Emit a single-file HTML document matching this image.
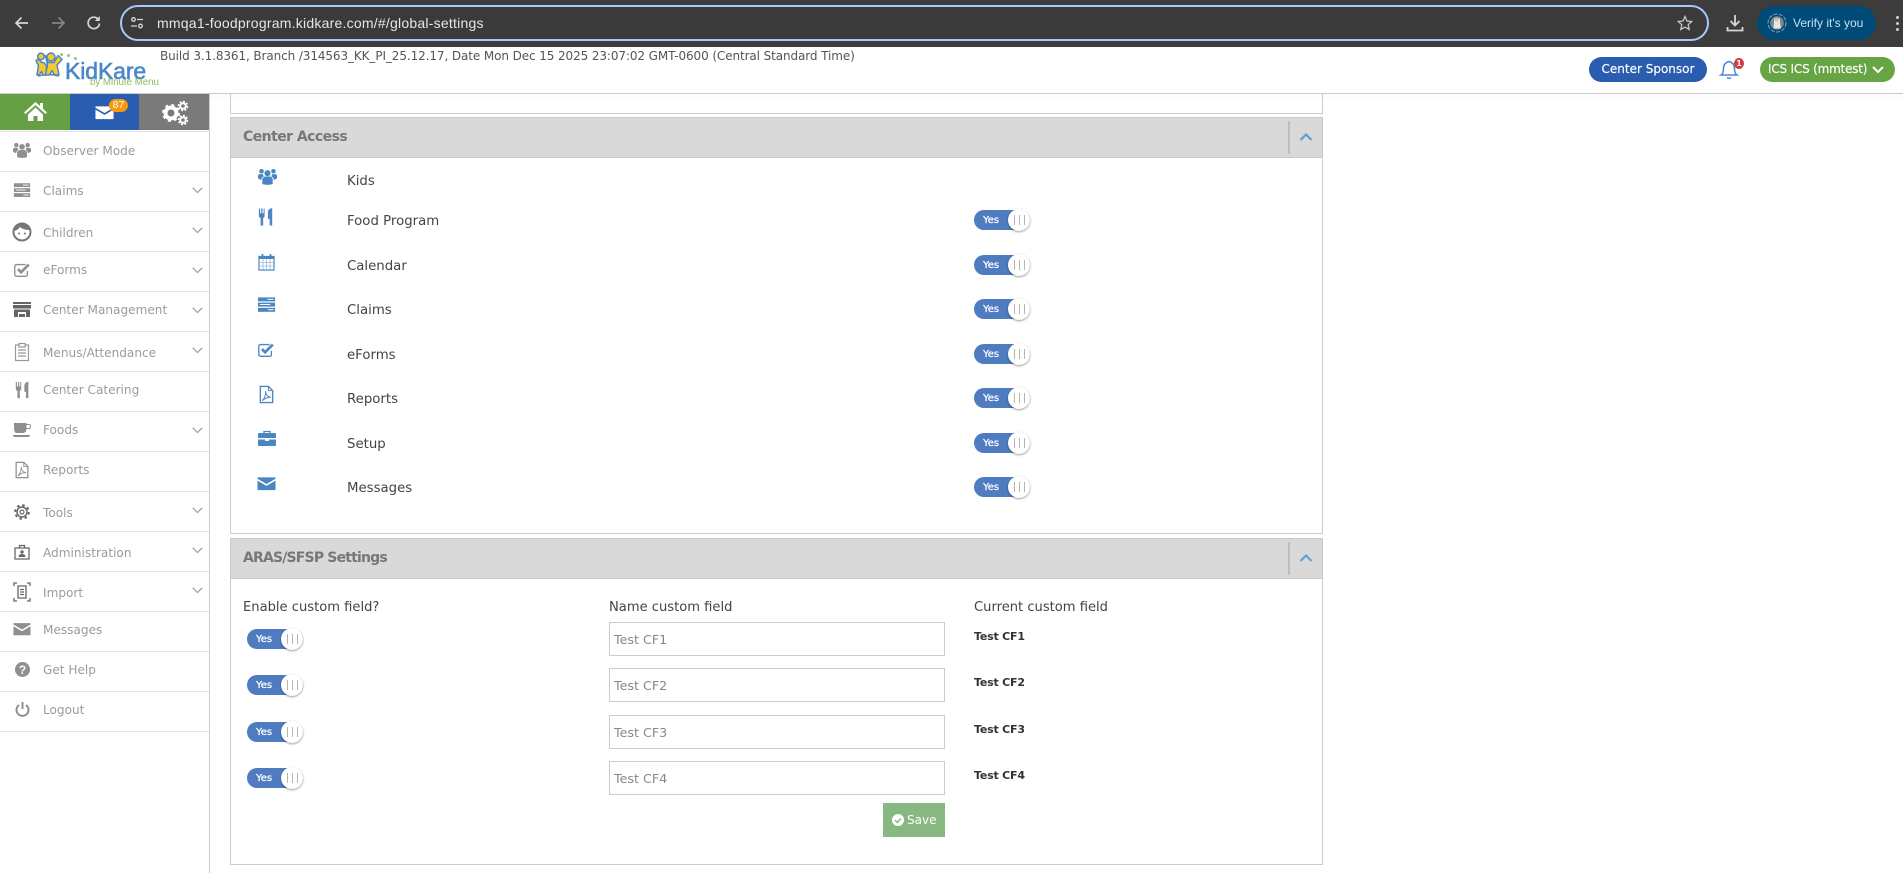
<!DOCTYPE html>
<html lang="en"><head><meta charset="utf-8"><title>KidKare</title>
<style>
*{box-sizing:border-box}
html,body{margin:0;padding:0;width:1903px;height:873px;overflow:hidden;background:#fff;font-family:"DejaVu Sans","Liberation Sans",sans-serif}
.a,.t,svg.i,.tg,.b{position:absolute}
.t{white-space:nowrap;line-height:20px;height:20px}
.s{left:43px;font-size:12.100px;color:#9b9b9b;letter-spacing:0}
.l{left:347px;font-size:13.300px;color:#444;margin-top:1px}
.h{left:243px;font-size:14px;font-weight:bold;color:#777;letter-spacing:-.55px}
.c{left:974px;font-size:11px;font-weight:bold;color:#333;letter-spacing:-.2px}
.n{font-size:13.100px;color:#444;margin-top:1px}
.line{position:absolute;left:0;width:209px;height:1px;background:#e4e4e4}
.tg{width:56px;height:20px;background:#4f7cc0;border-radius:10px}
.tg b{position:absolute;left:9px;top:1px;line-height:20px;font-size:10px;font-weight:normal;color:#fff;-webkit-text-stroke:.25px #fff}
.tg i{position:absolute;left:34px;top:-1px;width:22px;height:22px;border-radius:50%;background:#fff;box-shadow:0 1px 2px rgba(0,0,0,.4)}
.tg i:after{content:"";position:absolute;left:6px;top:6px;width:9px;height:10px;border-left:1px solid #b5b5b5;border-right:1px solid #b5b5b5;background:linear-gradient(#b5b5b5,#b5b5b5) center/1px 100% no-repeat}
.in{position:absolute;left:609px;width:336px;height:34px;border:1px solid #ccc;background:#fff;color:#888;font-size:12.700px;line-height:34px;padding-left:4px}
svg.sb{color:#8f8f8f}
svg.bl{color:#4a87c2}
</style></head><body>
<svg width="0" height="0" style="position:absolute"><defs>
<symbol id="people" viewBox="0 0 20 20"><g fill="currentColor"><circle cx="10" cy="6.500" r="3.200"/><circle cx="3.700" cy="4.500" r="2.400"/><circle cx="16.300" cy="4.500" r="2.400"/><path d="M4.500 18v-4.500A3.500 3.500 0 0 1 8 10h4a3.500 3.500 0 0 1 3.500 3.500V18q-5.500 1.500-11 0z"/><path d="M0 12V9.500A2 2 0 0 1 2 7.500h3a4 4 0 0 0 1.300 2.300A4.500 4.500 0 0 0 3.500 13v.5Q1 13 0 12zM20 12V9.500a2 2 0 0 0-2-2h-3a4 4 0 0 1-1.300 2.300A4.500 4.500 0 0 1 16.500 13v.5Q19 13 20 12z"/></g></symbol>
<symbol id="server" viewBox="0 0 20 20"><g fill="currentColor"><rect x="1" y="2.500" width="18" height="4.200"/><rect x="1" y="8" width="18" height="4.200"/><rect x="1" y="13.500" width="18" height="4.200"/></g><g fill="#fff"><rect x="11" y="4" width="6.500" height="1"/><rect x="3" y="9.500" width="11" height="1"/><rect x="11.500" y="15" width="6" height="1"/></g></symbol>
<symbol id="check" viewBox="0 0 20 20"><path d="M16 11v4a2 2 0 0 1-2 2H4a2 2 0 0 1-2-2V6a2 2 0 0 1 2-2h10" fill="none" stroke="currentColor" stroke-width="1.500"/><path d="M5.500 9l3.500 3.500L17.500 4" fill="none" stroke="currentColor" stroke-width="3"/></symbol>
<symbol id="pdf" viewBox="0 0 20 20"><path d="M3.500 1.500H12l4.500 4.500v12.500h-13z" fill="none" stroke="currentColor" stroke-width="1.400"/><path d="M12 1.500V6h4.500M5.500 16.500C8 14 9.500 10 9 6.500c0 3 2 6 5.500 6.500-3-.5-6 1-9 3.500z" fill="none" stroke="currentColor" stroke-width="1"/></symbol>
<symbol id="food" viewBox="0 0 20 20"><path fill="currentColor" d="M2 1h1.300v5h1.200V1h1.300v5h1.200V1H8v8q0 1.500-1.500 2v8H3.800v-8Q2 10.500 2 9zM11.500 12V5q0-3.500 4.500-4.500V19h-2.700v-7z"/></symbol>
<symbol id="mail" viewBox="0 0 20 20"><path fill="currentColor" d="M1 3.500h18q.5 0 .5.500v1L10 10.500.5 5V4q0-.5.500-.5zM.5 7l9.500 5.500L19.500 7v9.500q0 .5-.5.500H1q-.5 0-.5-.5z"/></symbol>
</defs></svg>

<!-- browser chrome -->
<div class="a" style="left:0;top:0;width:1903px;height:47px;background:#3c3c3c"></div>
<svg class="i" style="left:13px;top:14px" width="18" height="18" viewBox="0 0 18 18"><path d="M15 9H3.500M8.500 3.500L3 9l5.500 5.500" fill="none" stroke="#d6d6d6" stroke-width="1.700"/></svg>
<svg class="i" style="left:49px;top:14px" width="18" height="18" viewBox="0 0 18 18"><path d="M3 9h11.500M9.500 3.500L15 9l-5.500 5.500" fill="none" stroke="#858585" stroke-width="1.700"/></svg>
<svg class="i" style="left:85px;top:14px" width="18" height="18" viewBox="0 0 18 18"><path d="M14.500 9.500A5.700 5.700 0 1 1 13 5" fill="none" stroke="#d6d6d6" stroke-width="1.700"/><path d="M14.800 2v5h-5z" fill="#d6d6d6"/></svg>
<div class="a" style="left:120px;top:5px;width:1589px;height:36px;border:2px solid #a8c7fa;border-radius:18px;background:#3a3a3a"></div>
<svg class="i" style="left:130px;top:16px" width="14" height="14" viewBox="0 0 14 14"><g fill="none" stroke="#d6d6d6" stroke-width="1.300"><circle cx="3.500" cy="3.500" r="1.800"/><path d="M7 3.500h6M1 10h6"/><circle cx="10.500" cy="10" r="1.800"/></g></svg>
<div class="t" style="left:157px;top:13px;font-family:'Liberation Sans',sans-serif;font-size:14px;color:#e6e6e6;letter-spacing:.23px">mmqa1-foodprogram.kidkare.com/#/global-settings</div>
<svg class="i" style="left:1677px;top:15px" width="16" height="16" viewBox="0 0 16 16"><path d="M8 1.500l2 4.500 4.800.5-3.600 3.200 1 4.800L8 12.100 3.800 14.500l1-4.800L1.200 6.500 6 6z" fill="none" stroke="#c8c8c8" stroke-width="1.300"/></svg>
<svg class="i" style="left:1726px;top:14px" width="18" height="18" viewBox="0 0 18 18"><path d="M9 1v10M4.500 7L9 11.500 13.500 7M1.500 13v3.500h15V13" fill="none" stroke="#d6d6d6" stroke-width="1.800"/></svg>
<div class="a" style="left:1757px;top:6px;width:119px;height:34px;border-radius:17px;background:#004a77"></div>
<svg class="i" style="left:1767px;top:13px" width="20" height="20" viewBox="0 0 20 20"><circle cx="10" cy="10" r="9" fill="none" stroke="#7fa6bf" stroke-width="1" stroke-dasharray="4 1.500"/><circle cx="10" cy="10" r="6.800" fill="#7a8890"/><path d="M7 5.500h6v4l1 6H6.500l.5-6z" fill="#e6e6e6"/><circle cx="9.500" cy="6.500" r="2" fill="#d4b8a0"/></svg>
<div class="t" style="left:1793px;top:13px;font-family:'Liberation Sans',sans-serif;font-size:12px;color:#c2e0f5">Verify it's you</div>
<div class="a" style="left:1896px;top:16px;width:3px;height:3px;border-radius:50%;background:#d0d0d0;box-shadow:0 6px 0 #d0d0d0,0 12px 0 #d0d0d0"></div>

<!-- app header -->
<div class="a" style="left:0;top:93px;width:1903px;height:1px;background:#ccc;box-shadow:0 2px 5px rgba(0,0,0,.08)"></div>
<svg class="i" style="left:35px;top:52px" width="28" height="26" viewBox="0 0 28 26"><path d="M3 24q10-3 21 0" fill="none" stroke="#4a87c8" stroke-width="1.500"/><g fill="#f7c92e" stroke="#4a87c8" stroke-width="1.500" stroke-linejoin="round"><path d="M1 8.500L3.500 7 6.500 10.500H9L11.500 14 11 23H8L6.500 19.500 4 23H2L3.500 13.500z"/><path d="M10.500 3.500L13 10.500H19L23 3.500 27 7.500 22 13 24 23H19.500L17 18.500 14.500 23H10.500L12.500 13z"/><circle cx="6" cy="4.500" r="3.300"/><circle cx="16" cy="5" r="4"/></g></svg>
<div class="t" style="left:65px;top:58px;height:26px;line-height:26px;font-family:'Liberation Sans',sans-serif;font-size:23px;color:#4a87c8;-webkit-text-stroke:.6px #4a87c8;letter-spacing:-.1px">KidKare</div>
<div class="t" style="left:90px;top:73px;font-family:'Liberation Sans',sans-serif;font-size:9.700px;color:#8dbb5a">by Minute Menu</div>
<div class="a" style="left:60px;top:53px;width:3px;height:3px;background:#9cc56f;border-radius:50%;box-shadow:7px 1px 0 #9cc56f,14px 4px 0 #9cc56f"></div>
<div class="t" style="left:160px;top:46px;font-size:12px;color:#555;letter-spacing:-.1px">Build 3.1.8361, Branch /314563_KK_PI_25.12.17, Date Mon Dec 15 2025 23:07:02 GMT-0600 (Central Standard Time)</div>
<div class="a" style="left:1589px;top:57px;width:118px;height:25px;border-radius:13px;background:#2a5db0"></div>
<div class="t" style="left:1589px;top:59px;width:118px;text-align:center;font-size:12px;color:#fff;-webkit-text-stroke:.15px #fff">Center Sponsor</div>
<svg class="i" style="left:1719px;top:59px" width="20" height="21" viewBox="0 0 20 21"><path d="M2 16q2.500-1.500 2.500-6.500 0-5.500 5.500-7 5.500 1.500 5.500 7 0 5 2.500 6.500zM8 18.500q2 1.800 4 0" fill="none" stroke="#4a87d8" stroke-width="1.500"/></svg>
<div class="a" style="left:1734px;top:58px;width:10px;height:11px;border-radius:50%;background:#d23b3b;color:#fff;font-size:8px;font-weight:bold;line-height:11px;text-align:center">1</div>
<div class="a" style="left:1760px;top:57px;width:135px;height:25px;border-radius:13px;background:#67a544"></div>
<div class="t" style="left:1768px;top:59px;font-size:12px;color:#fff;letter-spacing:-.2px;-webkit-text-stroke:.15px #fff">ICS ICS (mmtest)</div>
<svg class="i" style="left:1871px;top:65px" width="14" height="10" viewBox="0 0 14 10"><path d="M2 2l5 5 5-5" fill="none" stroke="#fff" stroke-width="2"/></svg>

<!-- sidebar -->
<div class="a" style="left:209px;top:94px;width:1px;height:779px;background:#ccc"></div>
<div class="a" style="left:0;top:94px;width:70px;height:36px;background:#67a044"></div>
<div class="a" style="left:70px;top:94px;width:69px;height:36px;background:#2a5db0"></div>
<div class="a" style="left:139px;top:94px;width:70px;height:36px;background:#7a7a7a"></div>
<svg class="i" style="left:24px;top:101px" width="23" height="21" viewBox="0 0 23 21"><path d="M11.500 1L0 11.500l1.500 1.500 10-9 10 9 1.500-1.500-4-3.700V2h-3v3zM4 13.500V20h5.500v-5h4v5H19v-6.500l-7.500-7z" fill="#fff"/></svg>
<svg class="i" style="left:95px;top:103px" width="19" height="19" viewBox="0 0 20 20" color="#fff"><use href="#mail"/></svg>
<div class="a" style="left:109px;top:99px;width:19px;height:13px;border-radius:7px;background:#f59a0c;color:#fff;font-family:'Liberation Sans',sans-serif;font-size:10.500px;line-height:13px;text-align:center">87</div>
<svg class="i" style="left:161px;top:99px" width="28" height="28" viewBox="0 0 28 28"><g fill="none" stroke="#fff"><circle cx="10" cy="14" r="5.500" stroke-width="4"/><circle cx="10" cy="14" r="8" stroke-width="2" stroke-dasharray="3 3.300"/><circle cx="22" cy="7" r="2.800" stroke-width="2"/><circle cx="22" cy="7" r="4.500" stroke-width="1.500" stroke-dasharray="2 1.500"/><circle cx="22" cy="21" r="2.800" stroke-width="2"/><circle cx="22" cy="21" r="4.500" stroke-width="1.500" stroke-dasharray="2 1.500"/></g></svg>

<div class="line" style="top:131px"></div><div class="line" style="top:171px"></div><div class="line" style="top:211px"></div><div class="line" style="top:251px"></div><div class="line" style="top:291px"></div><div class="line" style="top:331px"></div><div class="line" style="top:371px"></div><div class="line" style="top:411px"></div><div class="line" style="top:451px"></div><div class="line" style="top:491px"></div><div class="line" style="top:531px"></div><div class="line" style="top:571px"></div><div class="line" style="top:611px"></div><div class="line" style="top:651px"></div><div class="line" style="top:691px"></div><div class="line" style="top:731px"></div>

<svg class="i sb" style="left:13px;top:141px" width="18" height="18"><use href="#people"/></svg>
<div class="t s" style="top:141px">Observer Mode</div>
<svg class="i sb" style="left:13px;top:181px" width="18" height="18"><use href="#server"/></svg>
<div class="t s" style="top:181px">Claims</div>
<svg class="i" style="left:12px;top:222px" width="20" height="20" viewBox="0 0 20 20"><circle cx="10" cy="10" r="8.500" fill="#fff" stroke="#777" stroke-width="2"/><path d="M2 9q4-1 6-4 3 3 10 3-1-6.500-8-6.500T2 9z" fill="#777"/><circle cx="7" cy="11.500" r="1" fill="#777"/><circle cx="13" cy="11.500" r="1" fill="#777"/></svg>
<div class="t s" style="top:223px">Children</div>
<svg class="i sb" style="left:13px;top:261px" width="18" height="18"><use href="#check"/></svg>
<div class="t s" style="top:260px">eForms</div>
<svg class="i" style="left:13px;top:301px" width="18" height="18" viewBox="0 0 18 18"><path d="M0 1h18v2H0zM0 4h18v3.500H0zM1 8.500h16V16h-4v-5H5v5H1zM6 13h6v3H6z" fill="#666"/></svg>
<div class="t s" style="top:300px">Center Management</div>
<svg class="i" style="left:14px;top:342px" width="16" height="20" viewBox="0 0 16 20"><path d="M5 3H1.500v15.500h13V3H11M5 1.500h6V5H5zM4 8h8M4 11h8M4 14h8" fill="none" stroke="#999" stroke-width="1.200"/></svg>
<div class="t s" style="top:343px">Menus/Attendance</div>
<svg class="i sb" style="left:14px;top:381px" width="18" height="18"><use href="#food"/></svg>
<div class="t s" style="top:380px">Center Catering</div>
<svg class="i" style="left:13px;top:422px" width="18" height="16" viewBox="0 0 18 16"><path d="M1 1h12.500v1H16q2 0 2 2.500T16 7h-2.500q-.5 4-3.500 4H4Q1 11 1 6zM13.500 3v3H16q1 0 1-1.500T16 3zM0 13h17q0 2-2 2H2q-2 0-2-2z" fill="#8f8f8f"/></svg>
<div class="t s" style="top:420px">Foods</div>
<svg class="i sb" style="left:13px;top:461px" width="18" height="18"><use href="#pdf"/></svg>
<div class="t s" style="top:460px">Reports</div>
<svg class="i" style="left:14px;top:504px" width="16" height="16" viewBox="0 0 16 16"><circle cx="8" cy="8" r="5" fill="none" stroke="#666" stroke-width="1.400"/><circle cx="8" cy="8" r="2" fill="none" stroke="#666" stroke-width="1.200"/><circle cx="8" cy="8" r="6.800" fill="none" stroke="#666" stroke-width="2" stroke-dasharray="2.500 2.840"/></svg>
<div class="t s" style="top:503px">Tools</div>
<svg class="i" style="left:14px;top:544px" width="16" height="16" viewBox="0 0 16 16"><path d="M1 4h14v11H1zM5.500 4V1.500h5V4" fill="none" stroke="#666" stroke-width="1.300"/><circle cx="8" cy="8" r="1.700" fill="#666"/><path d="M4.500 13q0-3 3.500-3t3.500 3z" fill="#666"/></svg>
<div class="t s" style="top:543px">Administration</div>
<svg class="i" style="left:13px;top:582px" width="18" height="20" viewBox="0 0 18 20"><path d="M1 4V1h3M14 1h3v3M17 16v3h-3M4 19H1v-3M5 4h8v12H5zM7 7.500h4M7 10h4M7 12.500h4" fill="none" stroke="#666" stroke-width="1.300"/></svg>
<div class="t s" style="top:583px">Import</div>
<svg class="i sb" style="left:13px;top:620px" width="18" height="18"><use href="#mail"/></svg>
<div class="t s" style="top:620px">Messages</div>
<svg class="i" style="left:15px;top:662px" width="15" height="15" viewBox="0 0 15 15"><circle cx="7.500" cy="7.500" r="7.500" fill="#8f8f8f"/><text x="7.500" y="12" text-anchor="middle" font-family="Liberation Sans,sans-serif" font-size="12" font-weight="bold" fill="#fff">?</text></svg>
<div class="t s" style="top:660px">Get Help</div>
<svg class="i" style="left:15px;top:702px" width="15" height="15" viewBox="0 0 15 15"><path d="M4 3a6 6 0 1 0 7 0M7.500 0v7" fill="none" stroke="#8f8f8f" stroke-width="2"/></svg>
<div class="t s" style="top:700px">Logout</div>

<svg class="i" style="left:192px;top:187px" width="11" height="7" viewBox="0 0 11 7"><path d="M.7.700l4.800 4.800L10.300.700" fill="none" stroke="#9a9a9a" stroke-width="1.100"/></svg>
<svg class="i" style="left:192px;top:227px" width="11" height="7" viewBox="0 0 11 7"><path d="M.7.700l4.800 4.800L10.300.700" fill="none" stroke="#9a9a9a" stroke-width="1.100"/></svg>
<svg class="i" style="left:192px;top:267px" width="11" height="7" viewBox="0 0 11 7"><path d="M.7.700l4.800 4.800L10.300.700" fill="none" stroke="#9a9a9a" stroke-width="1.100"/></svg>
<svg class="i" style="left:192px;top:307px" width="11" height="7" viewBox="0 0 11 7"><path d="M.7.700l4.800 4.800L10.300.700" fill="none" stroke="#9a9a9a" stroke-width="1.100"/></svg>
<svg class="i" style="left:192px;top:347px" width="11" height="7" viewBox="0 0 11 7"><path d="M.7.700l4.800 4.800L10.300.700" fill="none" stroke="#9a9a9a" stroke-width="1.100"/></svg>
<svg class="i" style="left:192px;top:427px" width="11" height="7" viewBox="0 0 11 7"><path d="M.7.700l4.800 4.800L10.300.700" fill="none" stroke="#9a9a9a" stroke-width="1.100"/></svg>
<svg class="i" style="left:192px;top:507px" width="11" height="7" viewBox="0 0 11 7"><path d="M.7.700l4.800 4.800L10.300.700" fill="none" stroke="#9a9a9a" stroke-width="1.100"/></svg>
<svg class="i" style="left:192px;top:547px" width="11" height="7" viewBox="0 0 11 7"><path d="M.7.700l4.800 4.800L10.300.700" fill="none" stroke="#9a9a9a" stroke-width="1.100"/></svg>
<svg class="i" style="left:192px;top:587px" width="11" height="7" viewBox="0 0 11 7"><path d="M.7.700l4.800 4.800L10.300.700" fill="none" stroke="#9a9a9a" stroke-width="1.100"/></svg>

<!-- top stub panel -->
<div class="a" style="left:230px;top:94px;width:1093px;height:20px;border:1px solid #ccc;border-top:0"></div>

<!-- center access panel -->
<div class="a" style="left:230px;top:117px;width:1093px;height:417px;border:1px solid #ccc"></div>
<div class="a" style="left:230px;top:117px;width:1093px;height:41px;background:#d9d9d9;border:1px solid #c8c8c8"></div>
<div class="t h" style="top:127px">Center Access</div>
<div class="a" style="left:1288px;top:121px;width:2px;height:33px;background:#bdbdbd"></div>
<svg class="i" style="left:1299px;top:132px" width="14" height="10" viewBox="0 0 14 10"><path d="M1.500 8L7 2.500 12.500 8" fill="none" stroke="#5f9fd4" stroke-width="2.200"/></svg>

<svg class="i bl" style="left:258px;top:167px" width="19" height="19"><use href="#people"/></svg>
<div class="t l" style="top:171px">Kids</div>
<svg class="i bl" style="left:257px;top:207px" width="19" height="20"><use href="#food"/></svg>
<div class="t l" style="top:211px">Food Program</div>
<svg class="i" style="left:258px;top:253px" width="17" height="18" viewBox="0 0 17 18"><path d="M1 3.500h15v13.500H1z" fill="#fff" stroke="#4a87c2" stroke-width="1.200"/><path d="M1 3h15v3H1z" fill="#4a87c2"/><path d="M4.500 1v4M12.500 1v4" stroke="#4a87c2" stroke-width="1.800"/><path d="M1 9.500h15M1 13h15M5 6v11M8.500 6v11M12 6v11" stroke="#9bbbdc" stroke-width=".8"/></svg>
<div class="t l" style="top:256px">Calendar</div>
<svg class="i bl" style="left:257px;top:295px" width="19" height="19"><use href="#server"/></svg>
<div class="t l" style="top:300px">Claims</div>
<svg class="i bl" style="left:257px;top:341px" width="18" height="18"><use href="#check"/></svg>
<div class="t l" style="top:345px">eForms</div>
<svg class="i bl" style="left:257px;top:385px" width="19" height="19"><use href="#pdf"/></svg>
<div class="t l" style="top:389px">Reports</div>
<svg class="i" style="left:258px;top:430px" width="18" height="16" viewBox="0 0 18 16"><path d="M6 3V1.500h6V3" fill="none" stroke="#4a87c2" stroke-width="1.300"/><path d="M1 3h16q1 0 1 1v4H0V4q0-1 1-1zM0 9.500h7V11h4V9.500h7V15q0 1-1 1H1q-1 0-1-1z" fill="#4a87c2"/></svg>
<div class="t l" style="top:434px">Setup</div>
<svg class="i bl" style="left:257px;top:474px" width="19" height="19"><use href="#mail"/></svg>
<div class="t l" style="top:478px">Messages</div>

<div class="tg" style="left:974px;top:210px"><b>Yes</b><i></i></div>
<div class="tg" style="left:974px;top:255px"><b>Yes</b><i></i></div>
<div class="tg" style="left:974px;top:299px"><b>Yes</b><i></i></div>
<div class="tg" style="left:974px;top:344px"><b>Yes</b><i></i></div>
<div class="tg" style="left:974px;top:388px"><b>Yes</b><i></i></div>
<div class="tg" style="left:974px;top:433px"><b>Yes</b><i></i></div>
<div class="tg" style="left:974px;top:477px"><b>Yes</b><i></i></div>

<!-- ARAS panel -->
<div class="a" style="left:230px;top:538px;width:1093px;height:327px;border:1px solid #ccc"></div>
<div class="a" style="left:230px;top:538px;width:1093px;height:41px;background:#d9d9d9;border:1px solid #c8c8c8"></div>
<div class="t h" style="top:548px;letter-spacing:-.82px">ARAS/SFSP Settings</div>
<div class="a" style="left:1288px;top:542px;width:2px;height:33px;background:#bdbdbd"></div>
<svg class="i" style="left:1299px;top:553px" width="14" height="10" viewBox="0 0 14 10"><path d="M1.500 8L7 2.500 12.500 8" fill="none" stroke="#5f9fd4" stroke-width="2.200"/></svg>

<div class="t n" style="left:243px;top:597px">Enable custom field?</div>
<div class="t n" style="left:609px;top:597px">Name custom field</div>
<div class="t n" style="left:974px;top:597px">Current custom field</div>

<div class="tg" style="left:247px;top:629px"><b>Yes</b><i></i></div>
<div class="tg" style="left:247px;top:675px"><b>Yes</b><i></i></div>
<div class="tg" style="left:247px;top:722px"><b>Yes</b><i></i></div>
<div class="tg" style="left:247px;top:768px"><b>Yes</b><i></i></div>

<div class="in" style="top:622px">Test CF1</div>
<div class="in" style="top:668px">Test CF2</div>
<div class="in" style="top:715px">Test CF3</div>
<div class="in" style="top:761px">Test CF4</div>

<div class="t c" style="top:627px">Test CF1</div>
<div class="t c" style="top:673px">Test CF2</div>
<div class="t c" style="top:720px">Test CF3</div>
<div class="t c" style="top:766px">Test CF4</div>

<div class="a" style="left:883px;top:803px;width:62px;height:34px;background:#88b881"></div>
<svg class="i" style="left:892px;top:814px" width="12" height="12" viewBox="0 0 12 12"><circle cx="6" cy="6" r="6" fill="#fff"/><path d="M3 6.200l2.200 2.200L9 4.500" fill="none" stroke="#88b881" stroke-width="1.500"/></svg>
<div class="t" style="left:907px;top:810px;font-size:12px;color:#fff;letter-spacing:0">Save</div>
</body></html>
